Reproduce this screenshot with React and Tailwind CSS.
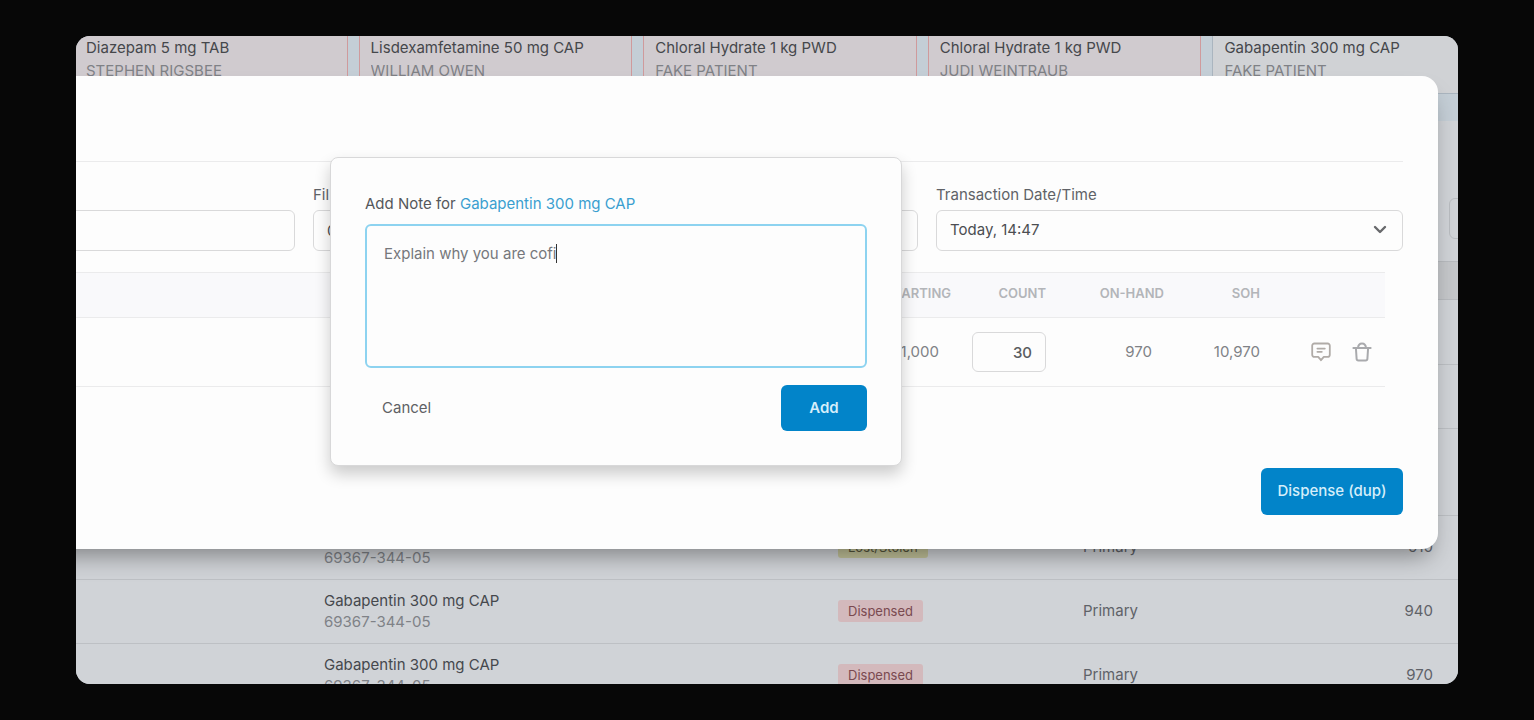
import { useState } from "react";

const prescriptions = [
    { drug: "Diazepam 5 mg TAB", patient: "STEPHEN RIGSBEE", alert: true },
    { drug: "Lisdexamfetamine 50 mg CAP", patient: "WILLIAM OWEN", alert: true },
    { drug: "Chloral Hydrate 1 kg PWD", patient: "FAKE PATIENT", alert: true },
    { drug: "Chloral Hydrate 1 kg PWD", patient: "JUDI WEINTRAUB", alert: true },
    { drug: "Gabapentin 300 mg CAP", patient: "FAKE PATIENT", alert: false }
];

const transactions = [
    { ndc: "69367-344-05", status: "Lost/Stolen", location: "Primary", balance: "910" },
    { drug: "Gabapentin 300 mg CAP", ndc: "69367-344-05", status: "Dispensed", location: "Primary", balance: "940" },
    { drug: "Gabapentin 300 mg CAP", ndc: "69367-344-05", status: "Dispensed", location: "Primary", balance: "970" }
];

const badgeColors = {
    "Dispensed": "bg-[#d3b9bc] text-[#7a4a50]",
    "Lost/Stolen": "bg-[#c3c39a] text-[#55553c]"
};

function NoteIcon() {
    return (
        <svg width="20" height="20" viewBox="0 0 20 20" fill="none" stroke="#b0aba7" strokeWidth="1.8" strokeLinecap="round" strokeLinejoin="round" aria-hidden="true">
            <path d="M3.4 1.5h13.2a2.2 2.2 0 0 1 2.2 2.2v9a2.2 2.2 0 0 1-2.2 2.2h-3.8L10 18.2l-2.8-3.3H3.4a2.2 2.2 0 0 1-2.2-2.2v-9a2.2 2.2 0 0 1 2.2-2.2z" />
            <path d="M6.4 6.6h7.4M6.4 9.8h4.4" />
        </svg>
    );
}

function TrashIcon() {
    return (
        <svg width="20" height="20" viewBox="0 0 20 20" fill="none" stroke="#a9aaad" strokeWidth="2" strokeLinecap="round" strokeLinejoin="round" aria-hidden="true">
            <path d="M1.4 6h17.2" />
            <path d="M6 6C6.2 3 7.7 1.4 10 1.4S13.8 3 14 6" />
            <path d="M3.9 6l.7 10.8a1.8 1.8 0 0 0 1.8 1.7h7.2a1.8 1.8 0 0 0 1.8-1.7L16.1 6" />
        </svg>
    );
}

function PrescriptionCards() {
    return (
        <div className="-ml-[2px] -mr-[28px] grid grid-cols-5 gap-[11px]">
            {prescriptions.map((p, i) => (
                <div
                    key={i}
                    className={`h-[58px] border-x border-b px-[11px] leading-[23px] ${p.alert ? "border-[#cf9a9c] bg-[#d0cbcf]" : "border-[#aab5bf] bg-[#d0d2d5]"}`}
                >
                    <div className="truncate text-[#45474b]">{p.drug}</div>
                    <div className="truncate text-[#7f8186]">{p.patient}</div>
                </div>
            ))}
        </div>
    );
}

function TransactionTable() {
    return (
        <table className="w-full table-fixed border-collapse">
            <colgroup>
                <col className="w-[248px]" />
                <col className="w-[514px]" />
                <col className="w-[245px]" />
                <col />
            </colgroup>
            <tbody>
                <tr className="h-[38px] border-y border-[#b8bbbf] bg-[#c5c7ca]"><td colSpan={4} /></tr>
                <tr className="h-[65px] border-b border-[#bdc0c4]"><td colSpan={4} /></tr>
                <tr className="h-[64px] border-b border-[#bdc0c4]"><td colSpan={4} /></tr>
                <tr className="h-[87px] border-b border-[#bdc0c4]"><td colSpan={4} /></tr>
                {transactions.map((t, i) => (
                    <tr key={i} className="h-[64px] border-b border-[#bdc0c4]">
                        <td />
                        <td className="pb-[2px] leading-[21px]">
                            <div className="h-[21px] text-[#45484d]">{t.drug}</div>
                            <div className="text-[#7f8287]">{t.ndc}</div>
                        </td>
                        <td>
                            <span className={`inline-block rounded-[3px] px-[10px] text-[13px] leading-[22px] ${badgeColors[t.status]}`}>
                                {t.status}
                            </span>
                        </td>
                        <td>
                            <div className="flex justify-between pr-[25px] text-[#5f6268]">
                                <span>{t.location}</span>
                                <span>{t.balance}</span>
                            </div>
                        </td>
                    </tr>
                ))}
            </tbody>
        </table>
    );
}

function AddNote() {
    const [note, setNote] = useState("Explain why you are cofi");

    return (
        <div
            role="dialog"
            aria-labelledby="note-label"
            className="absolute top-[81px] left-[294px] w-[572px] rounded-lg border border-[#d8d8d9] bg-[#fdfdfd] px-[34px] py-[34px] shadow-[0_8px_16px_rgba(0,0,0,0.2)]"
        >
            <label id="note-label" htmlFor="note" className="block leading-6 text-[#55575b]">
                Add Note for <span className="text-[#3a9fd0]">Gabapentin 300 mg CAP</span>
            </label>
            <div className="relative mt-2">
                <textarea
                    id="note"
                    value={note}
                    onChange={(e) => setNote(e.target.value)}
                    className="block h-[144px] w-full resize-none rounded-md border-2 border-[#8dd3f0] bg-transparent px-[17px] py-4 leading-6 text-[#76787c] outline-none"
                />
                {/* caret */}
                <span className="absolute top-[20px] left-[191px] h-[19px] w-px bg-[#333]" />
            </div>
            <div className="mt-[17px] flex items-center justify-between">
                <button type="button" className="px-[17px] leading-6 text-[#5f6165]">Cancel</button>
                <button type="button" className="h-[46px] w-[86px] rounded-md bg-[#0284c9] font-semibold text-[#d5eefa]">Add</button>
            </div>
        </div>
    );
}

function DispenseModal() {
    return (
        <div className="absolute top-[40px] right-[20px] -left-[40px] rounded-2xl bg-[#fdfdfd] pr-[35px] pb-[34px] shadow-[0_14px_24px_-8px_rgba(0,0,0,0.4)]">
            <div className="h-[86px] border-b border-[#ebebec]" />

            <div className="mt-[22px] flex gap-[18px]">
                <div className="min-w-0 flex-1">
                    <div className="h-[22px]" />
                    <input aria-label="Prescription" className="mt-1 h-[41px] w-full rounded-md border border-[#d9d9da] bg-transparent px-[14px]" />
                </div>
                <div className="w-[605px]">
                    <label htmlFor="fill" className="block leading-[22px] text-[#606267]">Fil</label>
                    <input id="fill" defaultValue="0" className="mt-1 h-[41px] w-full rounded-md border border-[#d9d9da] bg-transparent px-[13px] text-[#4c4e52]" />
                </div>
                <div className="w-[467px]">
                    <label htmlFor="date" className="block leading-[22px] text-[#606267]">Transaction Date/Time</label>
                    <div className="relative mt-1">
                        <select id="date" className="block h-[41px] w-full appearance-none rounded-md border border-[#d9d9da] bg-transparent px-[13px] text-[#4c4e52]">
                            <option>Today, 14:47</option>
                        </select>
                        <svg className="pointer-events-none absolute top-[15px] right-[16px]" width="14" height="10" viewBox="0 0 14 10" fill="none" stroke="#68696c" strokeWidth="2.4" strokeLinecap="round" strokeLinejoin="round">
                            <path d="M2 2l5 5 5-5" />
                        </svg>
                    </div>
                </div>
            </div>

            <div className="mt-[21px] pr-[18px]">
                <table className="w-full table-fixed border-collapse text-right text-[#808286]">
                    <colgroup>
                        <col />
                        <col className="w-[95px]" />
                        <col className="w-[118px]" />
                        <col className="w-[96px]" />
                        <col className="w-[125px]" />
                    </colgroup>
                    <thead>
                        <tr className="h-[45px] border-y border-[#ebebec] bg-[#f9f9fb] text-[13px] text-[#b3b5b9]">
                            <th className="pb-[2px] font-semibold">STARTING</th>
                            <th className="pb-[2px] font-semibold">COUNT</th>
                            <th className="pb-[2px] font-semibold">ON-HAND</th>
                            <th className="pb-[2px] font-semibold">SOH</th>
                            <th />
                        </tr>
                    </thead>
                    <tbody>
                        <tr className="h-[69px] border-b border-[#ebebec]">
                            <td className="pr-3">1,000</td>
                            <td>
                                <input aria-label="Count" defaultValue="30" className="h-[40px] w-[74px] rounded-md border border-[#d9d9da] bg-transparent pr-[13px] text-right font-medium text-[#5a5c60]" />
                            </td>
                            <td className="pr-3">970</td>
                            <td>10,970</td>
                            <td>
                                <div className="flex gap-[21px] pl-[51px]">
                                    <button type="button" aria-label="Add note"><NoteIcon /></button>
                                    <button type="button" aria-label="Delete"><TrashIcon /></button>
                                </div>
                            </td>
                        </tr>
                    </tbody>
                </table>
            </div>

            <div className="mt-[81px] flex justify-end">
                <button type="button" className="h-[47px] w-[142px] rounded-md bg-[#0284c9] font-medium text-[#d5eefa]">Dispense (dup)</button>
            </div>

            <AddNote />
        </div>
    );
}

export default function App() {
    return (
        <div className="flex h-screen bg-[#070707] px-[76px] py-[36px] font-[Inter,sans-serif] text-[15px]">
            <div className="relative min-w-0 flex-1 overflow-hidden rounded-[14px] bg-[#c4ced6]">
                <PrescriptionCards />
                <div className="mt-[27px] bg-[#d0d3d7]">
                    <div className="flex h-[140px] justify-end pt-[77px]">
                        <div className="w-[9px]">
                            <input aria-label="Search" className="h-[41px] w-[60px] rounded-md border border-[#b9bcc0]" />
                        </div>
                    </div>
                    <TransactionTable />
                </div>
                <DispenseModal />
            </div>
        </div>
    );
}
